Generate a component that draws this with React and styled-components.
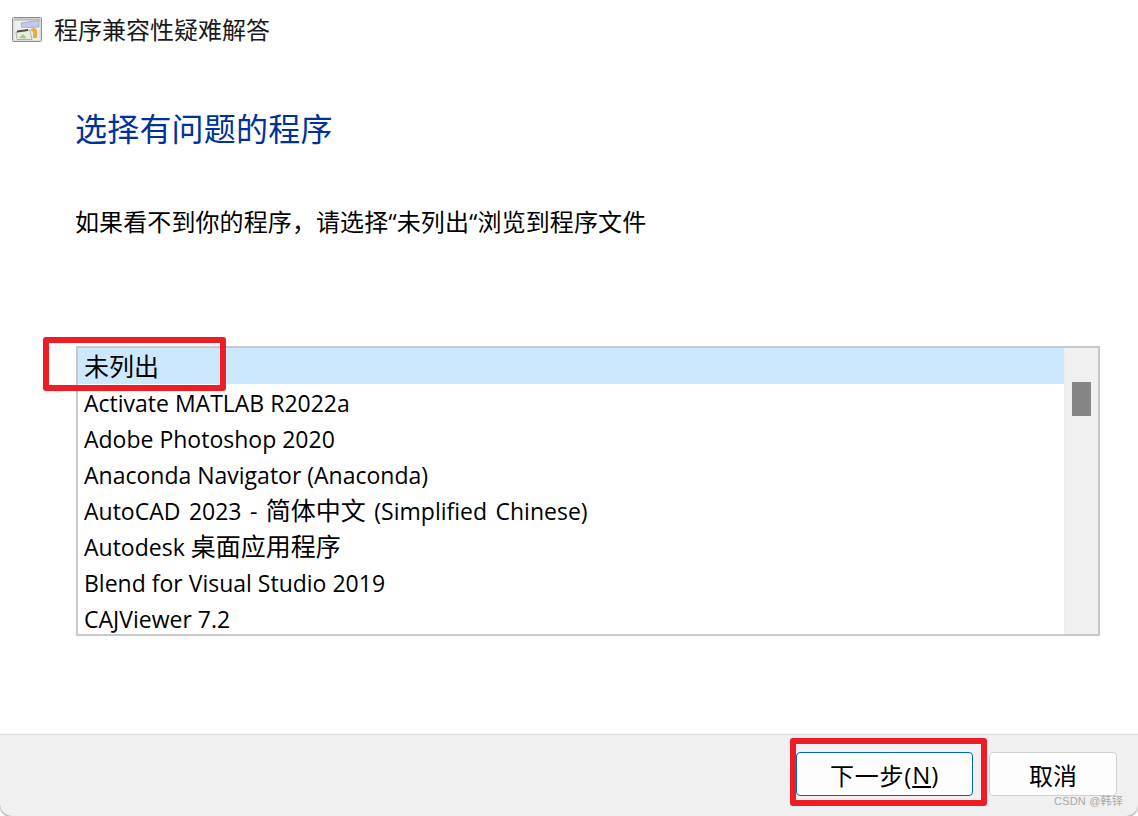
import React from 'react';
import styled, { createGlobalStyle } from 'styled-components';

const programs = [
  '未列出',
  'Activate MATLAB R2022a',
  'Adobe Photoshop 2020',
  'Anaconda Navigator (Anaconda)',
  'AutoCAD 2023 - 简体中文 (Simplified Chinese)',
  'Autodesk 桌面应用程序',
  'Blend for Visual Studio 2019',
  'CAJViewer 7.2',
];

// the list draws its Chinese a little larger than its Latin text
const splitName = (name) =>
  name.split(/([\u4e00-\u9fff]+)/).map((part, i) =>
    i % 2 === 1 ? <Cjk key={i}>{part}</Cjk> : part
  );

const AppIcon = () => (
  <svg width="31" height="26" viewBox="0 0 31 26">
    <rect x="0.5" y="0.5" width="29" height="24" rx="1" fill="#dedede" stroke="#8c8c8c" />
    <rect x="2" y="1.5" width="26" height="2" fill="#bdbdbd" />
    <rect x="2.5" y="4" width="25" height="19" fill="#eeeeee" />
    <path d="M9 6 L27 3.5 L27 10 L10 11 Z" fill="#c6c8ea" stroke="#9a9ac0" strokeWidth="0.7" />
    <rect x="10" y="11" width="15" height="2.5" fill="#fafafa" />
    <path d="M4 15 L18 13 L20 22.5 L5 22.5 Z" fill="#e9ecdf" stroke="#8a8a8a" strokeWidth="0.6" />
    <path d="M5 13.5 L16 12 L16 14 L5 15.5 Z" fill="#4d4d46" />
    <path d="M18 12.5 Q23 9.5 25 13 L25 21 L21 21 L21 15 Z" fill="#e5b03a" />
    <path d="M7 21 L11 17 L15 21.5 Z" fill="#9fc892" />
  </svg>
);

const App = () => {
  return (
    <Window>
      <GlobalStyle />
      <TitleBar>
        <AppIcon />
        <TitleText>程序兼容性疑难解答</TitleText>
      </TitleBar>
      <Content>
        <Heading>选择有问题的程序</Heading>
        <Description>如果看不到你的程序，请选择“未列出“浏览到程序文件</Description>
        <ListFrame>
          <ListBox>
            {programs.map((name, i) => (
              <ListRow key={name} $selected={i === 0} $wideSpaces={name.includes(' - ')}>
                {splitName(name)}
              </ListRow>
            ))}
          </ListBox>
          <ScrollTrack>
            <ScrollThumb />
          </ScrollTrack>
          <ListMark />
        </ListFrame>
      </Content>
      <Footer>
        <NextWrap>
          <FooterButton $primary>
            下一步(<Underlined>N</Underlined>)
          </FooterButton>
          <NextMark />
        </NextWrap>
        <FooterButton>取消</FooterButton>
      </Footer>
      <Watermark>CSDN @韩铎</Watermark>
    </Window>
  );
};

const GlobalStyle = createGlobalStyle`
  html, body {
    margin: 0;
    padding: 0;
    background: #ffffff;
  }
`;

const Window = styled.div`
  position: relative;
  width: 1138px;
  height: 816px;
  display: flex;
  flex-direction: column;
  overflow: hidden;
  background: #ffffff;
  color: #000000;
  font-family: "Open Sans", "Noto Sans CJK SC", sans-serif;
`;

const TitleBar = styled.div`
  display: flex;
  align-items: center;
  gap: 11px;
  height: 60px;
  padding-left: 12px;
  box-sizing: border-box;
`;

const TitleText = styled.span`
  font-size: 24px;
  line-height: 30px;
  color: #1a1a1a;
`;

const Content = styled.div`
  flex: 1;
  display: flex;
  flex-direction: column;
  padding: 0 38px 0 76px;
`;

const Heading = styled.h1`
  margin: 46px 0 0 -1px;
  font-size: 32px;
  font-weight: 400;
  line-height: 46px;
  letter-spacing: 0.2px;
  color: #003399;
`;

const Description = styled.p`
  margin: 52px 0 0 -1px;
  font-size: 24px;
  line-height: 36px;
  letter-spacing: 0.1px;
`;

const ListFrame = styled.div`
  position: relative;
  display: flex;
  height: 290px;
  margin-top: 106px;
  border: 2px solid #c8c8c8;
  box-sizing: border-box;
`;

const ListBox = styled.div`
  flex: 1;
  overflow: hidden;
  border-right: 1px solid #e6eef6;
`;

const ListRow = styled.div`
  height: 36px;
  line-height: 38px;
  padding-left: 6px;
  font-size: 23px;
  white-space: nowrap;
  word-spacing: ${(props) => (props.$wideSpaces ? '2.5px' : '0')};
  background: ${(props) => (props.$selected ? '#cce8ff' : 'transparent')};
`;

const Cjk = styled.span`
  font-size: 25px;
  line-height: 30px;
`;

const ScrollTrack = styled.div`
  width: 33px;
  background: #f0f0f0;
  padding: 34px 7px 0;
  box-sizing: border-box;
`;

const ScrollThumb = styled.div`
  width: 19px;
  height: 34px;
  background: #858585;
`;

const Footer = styled.div`
  display: flex;
  justify-content: flex-end;
  gap: 16px;
  height: 82px;
  padding: 17px 21px 0 0;
  box-sizing: border-box;
  background: #f0f0f0;
  border-top: 1px solid #dfdfdf;
  border-radius: 0 0 12px 12px;
  box-shadow: 0 1px 2px #8a8a8a;
`;

const NextWrap = styled.div`
  position: relative;
`;

const FooterButton = styled.div`
  display: flex;
  align-items: center;
  justify-content: center;
  width: ${(props) => (props.$primary ? '177px' : '128px')};
  height: 44px;
  box-sizing: border-box;
  font-size: 24px;
  letter-spacing: ${(props) => (props.$primary ? '0.8px' : '0')};
  background: #fdfdfd;
  border: 1px solid ${(props) => (props.$primary ? '#0067c0' : '#d0d0d0')};
  border-radius: 4px;
`;

const Underlined = styled.span`
  text-decoration: underline;
`;

const ListMark = styled.div`
  position: absolute;
  left: -35px;
  top: -11px;
  width: 183px;
  height: 54px;
  box-sizing: border-box;
  border: 6px solid #ee1c25;
  border-radius: 3px;
`;

const NextMark = styled.div`
  position: absolute;
  left: -6px;
  top: -14px;
  width: 197px;
  height: 68px;
  box-sizing: border-box;
  border: 6px solid #ee1c25;
  border-radius: 3px;
`;

const Watermark = styled.span`
  position: absolute;
  right: 15px;
  bottom: 8px;
  font-family: "Liberation Sans", "Noto Sans CJK SC", sans-serif;
  font-size: 11px;
  letter-spacing: 0.2px;
  color: #a9a9a9;
`;

export default App;
